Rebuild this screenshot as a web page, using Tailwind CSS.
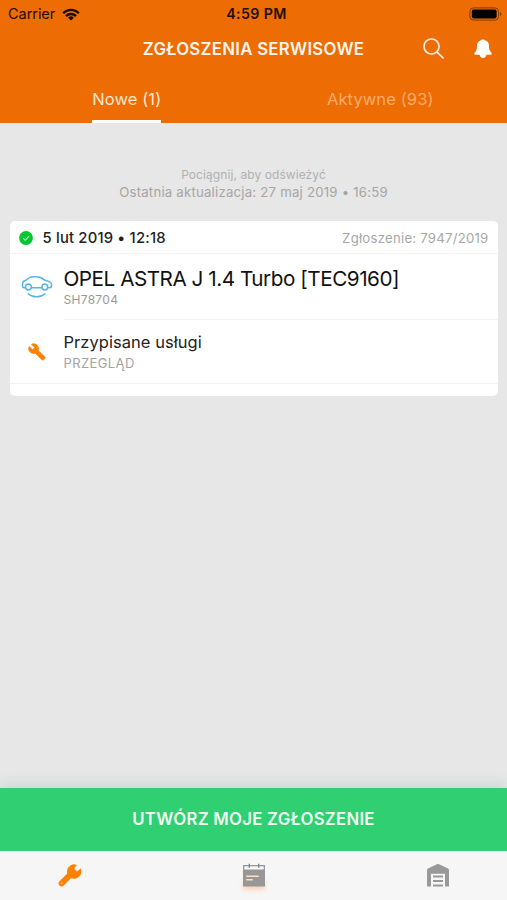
<!DOCTYPE html>
<html lang="pl">
<head>
<meta charset="utf-8">
<title>Zgłoszenia serwisowe</title>
<script src="https://cdn.jsdelivr.net/npm/@tailwindcss/browser@4"></script>
</head>
<body class="font-['Inter','Liberation_Sans',sans-serif]">
<div class="flex h-[900px] w-[507px] flex-col overflow-hidden bg-[#e7e7e7]">
  <header class="flex h-[123px] shrink-0 flex-col bg-[#ed6c04]">
    <div class="grid h-[28px] grid-cols-3 items-center pr-[5px] pl-[8px] text-[#230f00]">
      <div class="flex items-center gap-[7px]">
        <span class="text-[14.5px] leading-[20px] tracking-[-0.05px]">Carrier</span>
        <svg class="h-[13px] w-[18px]" viewBox="0 0 18 13" fill="none" stroke="#1a0b00" stroke-width="2.3"><path d="M1.2 5.2a11 11 0 0 1 15.6 0M4 8.1a7 7 0 0 1 10 0"/><path d="M9 12.6 6.1 9.7a4.1 4.1 0 0 1 5.8 0z" fill="#1a0b00" stroke="none"/></svg>
      </div>
      <span class="pl-[3px] text-center text-[14.2px] leading-[20px] font-semibold tracking-[0.4px] whitespace-nowrap">4:59 PM</span>
      <svg class="h-[14px] w-[33px] justify-self-end" viewBox="0 0 33 14"><rect x=".9" y=".9" width="28.6" height="12.2" rx="3.6" fill="none" stroke="#823c02" stroke-width="1"/><rect x="2.8" y="2.6" width="24.8" height="8.8" rx="1.8" fill="#000"/><path d="M31 5v4q1.4-.5 1.4-2T31 5z" fill="#823c02"/></svg>
    </div>
    <div class="grid h-[41px] grid-cols-[1fr_auto_1fr] items-center">
      <span></span>
      <h1 class="text-[16.8px] leading-[22px] font-semibold tracking-[0.28px] whitespace-nowrap text-[#fff6ee]">ZGŁOSZENIA SERWISOWE</h1>
      <div class="flex items-center justify-end gap-[29px] pr-[15px]">
        <svg class="h-[22px] w-[22px]" viewBox="0 0 22 22" fill="none" stroke="#fff1e2" stroke-width="1.7" stroke-linecap="round"><circle cx="8.500" cy="8.500" r="7.500"/><path d="m14 14 6 5.800"/></svg>
        <svg class="h-[20px] w-[18px]" viewBox="0 0 18 20" fill="#fff"><path d="M9 .4c1.300 0 2 .4 2.500 1.100 2.300.8 3.500 2.700 3.500 5.300 0 3.700.6 5.200 2.200 6.800.9.900.5 2.100-.6 2.100h-4.200c-.4 2.100-1.700 3.300-3.400 3.300s-3-1.200-3.400-3.300H1.400c-1.100 0-1.500-1.200-.6-2.100C2.400 12 3 10.500 3 6.800c0-2.600 1.200-4.500 3.500-5.300C7 .8 7.700.4 9 .4z"/></svg>
      </div>
    </div>
    <nav class="grid flex-1 grid-cols-2 justify-items-center text-[16.500px] leading-[22px] tracking-[0.100px] whitespace-nowrap">
      <a class="flex flex-col justify-between pt-[19px] text-[#ffe7d0]"><span>Nowe (1)</span><span class="h-[3px] w-full bg-white"></span></a>
      <a class="pt-[19px] text-[#f8ab6c]">Aktywne (93)</a>
    </nav>
  </header>

  <main class="flex flex-1 flex-col px-[9.500px] pt-[43px]">
    <div class="text-center whitespace-nowrap">
      <p class="text-[12px] leading-[17px] tracking-[0.080px] text-[#b1b1b1]">Pociągnij, aby odświeżyć</p>
      <p class="text-[13.200px] leading-[18px] tracking-[0.220px] text-[#a5a5a5]">Ostatnia aktualizacja: 27 maj 2019 • 16:59</p>
    </div>
    <article class="mt-[20px] h-[175px] overflow-hidden rounded-[5px] bg-white whitespace-nowrap">
      <div class="flex h-[33px] items-center border-b border-[#f3f3f3] pt-[2px] pr-[9px] pl-[9.500px]">
        <svg class="h-[14px] w-[14px]" viewBox="0 0 14 14"><circle cx="7" cy="7" r="6.900" fill="#06c531"/><path d="m4 7.100 2.200 2.200L10.200 5" fill="none" stroke="#c5f5cf" stroke-width="1.100"/></svg>
        <span class="ml-[9.500px] text-[14.800px] leading-[20px] font-medium tracking-[0.190px] text-[#222]">5 lut 2019 • 12:18</span>
        <span class="ml-auto text-[13.200px] leading-[18px] tracking-[0.230px] text-[#a7a7a7]">Zgłoszenie: 7947/2019</span>
      </div>
      <div class="flex h-[66px]">
        <div class="flex w-[54px] items-center justify-center">
          <svg class="h-[24px] w-[32px]" viewBox="0 0 32 24" fill="none" stroke="#56b5e4" stroke-width="1.500" stroke-linecap="round" stroke-linejoin="round"><path d="M4.300 12.700H3C1.900 12.700 1.500 12 1.500 10.800L1.700 7.800C1.800 6.500 2.800 5.900 4.500 5.500L8.500 2.700C10 1.700 17.500 1.500 19.500 2.500L24.500 5.500C28 6 30.500 7.200 30.500 9.500v1.300c0 1.200-.6 1.900-1.800 1.900h-1.600M10.500 12.700h10.200"/><circle cx="7.400" cy="12" r="2.900"/><circle cx="23.800" cy="12" r="2.900"/><path d="M7.200 18.700c4.800 4.200 12 4.200 16.800 0"/></svg>
        </div>
        <div class="flex-1 border-b border-[#f3f3f3] pt-[12px]">
          <h2 class="text-[20.700px] leading-[26px] tracking-[-0.470px] text-[#111]">OPEL ASTRA J 1.4 Turbo [TEC9160]</h2>
          <p class="text-[12px] leading-[16px] tracking-[0.300px] text-[#999]">SH78704</p>
        </div>
      </div>
      <div class="flex h-[64px] border-b border-[#f3f3f3]">
        <div class="flex w-[54px] items-center justify-center">
          <svg class="h-[18px] w-[18px]" viewBox="0 0 24 24" fill="#fd8204"><path d="M22.700 19l-9.100-9.100c.9-2.300.4-5-1.500-6.900-2-2-5-2.400-7.400-1.300L9 6 6 9 1.600 4.700C.4 7.100.9 10.100 2.900 12.100c1.900 1.900 4.600 2.400 6.900 1.500l9.100 9.100c.4.4 1 .4 1.400 0l2.300-2.300c.5-.4.5-1.100.1-1.400z" stroke="#fd8204" stroke-width="1" stroke-linejoin="round"/></svg>
        </div>
        <div class="pt-[11px]">
          <h3 class="text-[16.500px] leading-[23px] tracking-[0.040px] text-[#222]">Przypisane usługi</h3>
          <p class="text-[13px] leading-[19px] tracking-[0.400px] text-[#a3a3a3]">PRZEGLĄD</p>
        </div>
      </div>
    </article>
  </main>

  <button class="h-[63.500px] shrink-0 bg-[#2fcf72] text-[16.800px] font-semibold tracking-[0.260px] whitespace-nowrap text-[#effff4] shadow-[0_-2px_14px_rgba(47,150,90,0.200)]">UTWÓRZ MOJE ZGŁOSZENIE</button>

  <nav class="flex h-[49px] shrink-0 justify-between bg-[#f6f6f6] px-[57px] pt-[12px]">
    <svg class="h-[25px] w-[25px]" viewBox="0 0 25 25"><path d="M4.600 20.400 15 10" stroke="#fd8204" stroke-width="6" stroke-linecap="round"/><path d="M19.800 1.900A7.200 7.200 0 1 0 23.600 5.400L20 8.400 17.200 5.600z" fill="#fd8204"/><circle cx="4.700" cy="20.300" r="1" fill="#ffae60"/></svg>
    <svg class="h-[30px] w-[24px] overflow-visible" viewBox="0 0 24 30"><rect x="1" y="17" width="22" height="10" fill="#fcc49a" opacity=".65" style="filter:blur(2px)"/><path d="M1 2h22v21.500H1z" fill="#979797"/><path d="M2.300 3.300h19.400v3.200H2.300z" fill="#f6f6f6"/><path d="M7.300.8v4M16.700.8v4" stroke="#858585" stroke-width="1.400"/><path d="M4.200 13.300h12.500M4.200 16.700h6.600" stroke="#ffdfc6" stroke-width="1.400"/></svg>
    <svg class="h-[24px] w-[24px]" viewBox="0 0 24 24"><path d="M1 23.500V7q0-1 1-1.600L12 .8l10 4.600q1 .6 1 1.600v16.500h-4V10.800H5v12.700z" fill="#999"/><path d="M7 13.500h10M7 18h10M7 22.500h10" stroke="#999" stroke-width="2"/></svg>
  </nav>
</div>
</body>
</html>
